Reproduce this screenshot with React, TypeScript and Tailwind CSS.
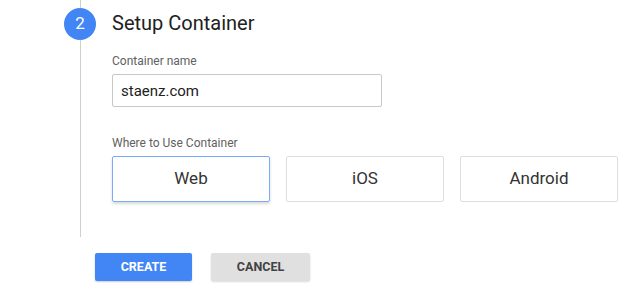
import { useState } from 'react'

const platforms = ['Web', 'iOS', 'Android']

export default function App() {
  const [name, setName] = useState('staenz.com')
  const [target, setTarget] = useState('Web')

  return (
    <main className="h-[297px] w-[629px] overflow-hidden bg-white font-['Roboto',sans-serif]">
      <section className="flex h-[237px] pl-[64px]">
        <div className="flex w-[32px] flex-col items-center">
          <div className="h-[8px] w-px bg-[#cfcfcf]" />
          <div className="flex h-[32px] w-[32px] items-center justify-center rounded-full bg-[#4285f4] text-[17px] text-white">
            2
          </div>
          <div className="w-px flex-1 bg-[#cfcfcf]" />
        </div>

        <div className="ml-[16px] flex-1">
          <h2 className="mt-[9px] text-[20px] leading-[28px] text-[#212121]">Setup Container</h2>

          <label className="mt-[16px] block text-[12px] leading-[16px] text-[#616161]">Container name</label>
          <input
            value={name}
            onChange={(e) => setName(e.target.value)}
            className="mt-[5px] block h-[33px] w-[270px] rounded-[2px] border border-[#c8c8c8] px-[8px] text-[15px] text-[#212121] outline-none"
          />

          <p className="mt-[28px] text-[12px] leading-[16px] text-[#616161]">Where to Use Container</p>
          <div className="mt-[5px] flex gap-[16px]">
            {platforms.map((p) => (
              <button
                key={p}
                onClick={() => setTarget(p)}
                className={
                  p === target
                    ? 'h-[46px] w-[158px] rounded-[2px] border border-[#7baaf7] text-[17px] text-[#333] shadow-[0_2px_3px_rgba(0,0,0,0.15)]'
                    : 'h-[46px] w-[158px] rounded-[2px] border border-[#dedede] text-[17px] text-[#333]'
                }
              >
                {p}
              </button>
            ))}
          </div>
        </div>
      </section>

      <div className="mt-[16px] flex gap-[19px] pl-[95px]">
        <button className="h-[28px] w-[97px] rounded-[2px] bg-[#4285f4] text-[12.5px] font-bold text-white shadow-[0_1px_2px_rgba(0,0,0,0.2)]">
          CREATE
        </button>
        <button className="h-[28px] w-[99px] rounded-[2px] bg-[#e0e0e0] text-[12.5px] font-bold text-[#424242] shadow-[0_1px_2px_rgba(0,0,0,0.15)]">
          CANCEL
        </button>
      </div>
    </main>
  )
}
